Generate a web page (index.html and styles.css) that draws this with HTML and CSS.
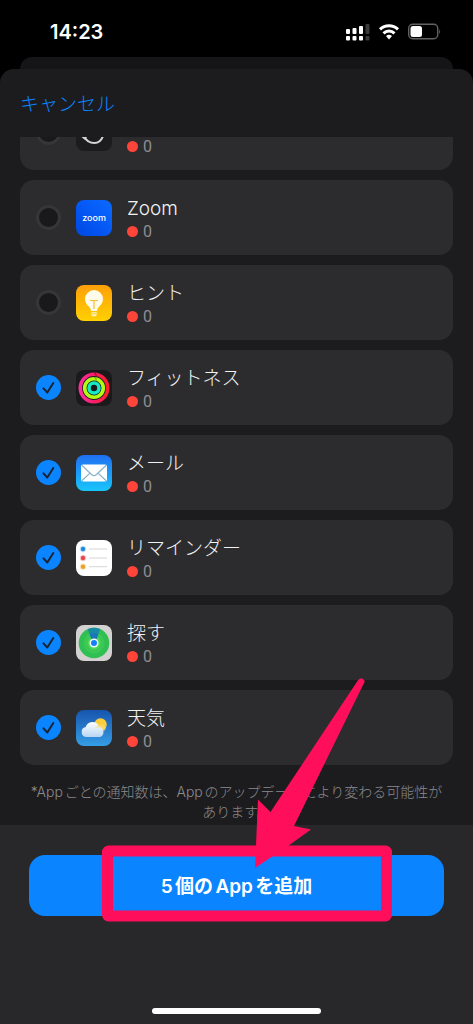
FILE: index.html
```html
<!DOCTYPE html>
<html lang="ja">
<head>
  <meta charset="UTF-8" />
  <meta name="viewport" content="width=device-width, initial-scale=1.0" />
  <title>Appを追加</title>
  <link rel="stylesheet" href="styles.css">
</head>
<body>
  <header class="status-bar">
    <span class="time">14:23</span>
    <svg class="status-icons" width="96" height="18" viewBox="0 0 96 18" aria-hidden="true">
      <g fill="#fff">
        <rect x="1" y="6" width="4" height="5" rx="1" />
        <rect x="7.5" y="5" width="4" height="6" rx="1" />
        <rect x="14" y="3" width="4" height="8" rx="1" />
        <rect x="1" y="13" width="4" height="4.5" rx="1" />
        <rect x="7.5" y="13" width="4" height="4.5" rx="1" />
        <rect x="14" y="13" width="4" height="4.5" rx="1" />
      </g>
      <g fill="#3a3a3c">
        <rect x="20.500" y="1" width="4" height="10" rx="1" />
        <rect x="20.500" y="13" width="4" height="4.5" rx="1" />
      </g>
      <g fill="none" stroke="#fff" stroke-width="3">
        <path d="M35 6.300a13 13 0 0 1 18 0" />
        <path d="M38.500 10.300a8 8 0 0 1 11 0" />
      </g>
      <path d="M41 13a4.500 4.500 0 0 1 6 0L44 16.400z" fill="#fff" />
      <rect x="63.700" y="1.200" width="29" height="14.600" rx="4" fill="none" stroke="#626264" stroke-width="1.400" />
      <rect x="65.500" y="3" width="11.500" height="11" rx="2.500" fill="#fff" />
      <path d="M94.200 6q1.800 2.500 0 5z" fill="#626264" />
    </svg>
  </header>

  <div class="back-sheet"></div>

  <main class="sheet">
    <div class="sheet-header">
      <button type="button" class="cancel">キャンセル</button>
    </div>

    <form class="app-form" id="appForm">
      <div class="app-list">
        <label class="app-row">
          <input type="checkbox" class="check" />
          <svg class="app-icon" viewBox="0 0 36 36" aria-hidden="true">
            <rect width="36" height="36" rx="8" fill="#1c1c1e" />
            <path d="M8 20.500q2.500 7.500 10.500 7.500q6 0 8.500-7" fill="none" stroke="#d5d5d7" stroke-width="2" />
            <path d="M5.500 22l6-1-2.500 4z" fill="#d5d5d7" />
          </svg>
          <span class="app-text">
            <span class="app-name"></span>
            <span class="app-count">0</span>
          </span>
        </label>

        <label class="app-row">
          <input type="checkbox" class="check" />
          <svg class="app-icon" viewBox="0 0 36 36" aria-hidden="true">
            <defs>
              <linearGradient id="zoomBg" x1="1" y1="0" x2="0" y2="1">
                <stop offset="0" stop-color="#0b6bff" />
                <stop offset=".5" stop-color="#0558f5" />
                <stop offset="1" stop-color="#0048e0" />
              </linearGradient>
            </defs>
            <rect width="36" height="36" rx="8" fill="url(#zoomBg)" />
            <text class="zoom-mark" x="18" y="20.500" text-anchor="middle">zoom</text>
          </svg>
          <span class="app-text">
            <span class="app-name">Zoom</span>
            <span class="app-count">0</span>
          </span>
        </label>

        <label class="app-row">
          <input type="checkbox" class="check" />
          <svg class="app-icon" viewBox="0 0 36 36" aria-hidden="true">
            <defs>
              <linearGradient id="tipsBg" x1="0" y1="0" x2="0" y2="1">
                <stop offset="0" stop-color="#ff9f0a" />
                <stop offset="1" stop-color="#ffd100" />
              </linearGradient>
            </defs>
            <rect width="36" height="36" rx="8" fill="url(#tipsBg)" />
            <path d="M18 5a9 9 0 0 0-9 9c0 3.500 1.800 5.500 3.800 7.500 1.500 1.500 2 2.500 2.200 4.500h6c.2-2 .7-3 2.200-4.500 2-2 3.800-4 3.800-7.500a9 9 0 0 0-9-9z" fill="#fffbea" />
            <path d="M15.200 27.200h5.600v2.300q-.3 2-2.800 2t-2.800-2z" fill="#fff3c0" />
            <path d="M15.200 28.800h5.600" stroke="#ffc400" stroke-width=".8" />
            <path d="M14 15.500h8M18 15.500v8.500" stroke="#f3bd35" stroke-width="1.200" fill="none" />
          </svg>
          <span class="app-text">
            <span class="app-name">ヒント</span>
            <span class="app-count">0</span>
          </span>
        </label>

        <label class="app-row">
          <input type="checkbox" class="check" checked />
          <svg class="app-icon" viewBox="0 0 36 36" aria-hidden="true">
            <defs>
              <linearGradient id="moveRing" x1="0" y1="0" x2="1" y2="0">
                <stop offset="0" stop-color="#ff2ea0" />
                <stop offset=".5" stop-color="#fa1e6c" />
                <stop offset="1" stop-color="#ff1f2c" />
              </linearGradient>
            </defs>
            <rect width="36" height="36" rx="8" fill="#1b191c" />
            <g fill="none" stroke-width="3.600">
              <circle cx="18" cy="18" r="13.700" stroke="url(#moveRing)" />
              <circle cx="18" cy="18" r="9.300" stroke="#b2fb12" />
              <circle cx="18" cy="18" r="5" stroke="#16e8c8" />
            </g>
            <path d="M18 2.500q3 1.500 2 3.700" fill="none" stroke="#8c0820" stroke-width="1" />
            <path d="M18 7q3 1 2 3.500" fill="none" stroke="#5f9410" stroke-width="1" />
          </svg>
          <span class="app-text">
            <span class="app-name">フィットネス</span>
            <span class="app-count">0</span>
          </span>
        </label>

        <label class="app-row">
          <input type="checkbox" class="check" checked />
          <svg class="app-icon" viewBox="0 0 36 36" aria-hidden="true">
            <defs>
              <linearGradient id="mailBg" x1="0" y1="0" x2="0" y2="1">
                <stop offset="0" stop-color="#1f70f2" />
                <stop offset="1" stop-color="#19c5fb" />
              </linearGradient>
            </defs>
            <rect width="36" height="36" rx="8" fill="url(#mailBg)" />
            <rect x="5" y="9.500" width="26" height="17" rx="2" fill="#fff" />
            <path d="M5.800 10.300l9.700 9.200q2.500 2.200 5 0l9.700-9.200M5.800 25.700l8.200-7.600M30.200 25.700L22 18.100" fill="none" stroke="#86b4cc" stroke-width="1.200" />
          </svg>
          <span class="app-text">
            <span class="app-name">メール</span>
            <span class="app-count">0</span>
          </span>
        </label>

        <label class="app-row">
          <input type="checkbox" class="check" checked />
          <svg class="app-icon" viewBox="0 0 36 36" aria-hidden="true">
            <rect width="36" height="36" rx="8" fill="#fff" />
            <g fill="none" stroke-width="1">
              <circle cx="7" cy="9" r="2.800" stroke="#b9dcf5" />
              <circle cx="7" cy="18" r="2.800" stroke="#f6c3c2" />
              <circle cx="7" cy="26.700" r="2.800" stroke="#f8dfb4" />
            </g>
            <circle cx="7" cy="9" r="2.200" fill="#2089dc" />
            <circle cx="7" cy="18" r="2.200" fill="#e8474a" />
            <circle cx="7" cy="26.700" r="2.200" fill="#eca126" />
            <path d="M13 9h18M13 18h18M13 26.700h18" stroke="#d6d6d8" stroke-width="1" />
          </svg>
          <span class="app-text">
            <span class="app-name">リマインダー</span>
            <span class="app-count">0</span>
          </span>
        </label>

        <label class="app-row">
          <input type="checkbox" class="check" checked />
          <svg class="app-icon" viewBox="0 0 36 36" aria-hidden="true">
            <rect width="36" height="36" rx="8" fill="#d3d2d1" />
            <circle cx="18" cy="18" r="15.300" fill="#30bf52" />
            <circle cx="18" cy="18" r="10.500" fill="#3bc854" />
            <circle cx="18" cy="18" r="6.500" fill="#4fd858" />
            <path d="M11.800 4.200q6.200-2.900 12.400 0L20.500 14h-5z" fill="#198aa5" />
            <path d="M13.700 9q4.300-1.500 8.600 0l-1.800 5h-5z" fill="#1a75ba" />
            <circle cx="18" cy="18" r="4.500" fill="#f1fbf4" />
            <circle cx="18" cy="18" r="3" fill="#147efb" />
          </svg>
          <span class="app-text">
            <span class="app-name">探す</span>
            <span class="app-count">0</span>
          </span>
        </label>

        <label class="app-row">
          <input type="checkbox" class="check" checked />
          <svg class="app-icon" viewBox="0 0 36 36" aria-hidden="true">
            <defs>
              <linearGradient id="skyBg" x1="0" y1="0" x2="0" y2="1">
                <stop offset="0" stop-color="#1755ae" />
                <stop offset="1" stop-color="#359ee5" />
              </linearGradient>
              <linearGradient id="cloud" x1="0" y1="0" x2="0" y2="1">
                <stop offset="0" stop-color="#fff" />
                <stop offset="1" stop-color="#b7d6f2" />
              </linearGradient>
            </defs>
            <rect width="36" height="36" rx="8" fill="url(#skyBg)" />
            <circle cx="24.500" cy="14.500" r="6.200" fill="#fdce3c" />
            <path d="M10.500 27a5 5 0 0 1-.8-9.900 7 7 0 0 1 13.300-.6 5.500 5.500 0 0 1 1 10.500z" fill="url(#cloud)" />
            <path d="M19.500 18a6 6 0 0 1 8.300 3.500 5 5 0 0 0 2-3.300 6 6 0 0 0-8-3.500z" fill="#f7dc87" opacity=".6" />
          </svg>
          <span class="app-text">
            <span class="app-name">天気</span>
            <span class="app-count">0</span>
          </span>
        </label>
      </div>

      <p class="note">*Appごとの通知数は、Appのアップデートにより変わる可能性があります。</p>
    </form>

    <footer class="sheet-footer">
      <div class="submit-wrap">
        <button type="submit" form="appForm" class="submit">5個のAppを追加</button>
        <svg class="pointer" width="290" height="244" viewBox="0 0 290 244" aria-hidden="true">
          <rect x="5.500" y="173" width="279" height="65" rx="1" fill="none" stroke="#ff0f5b" stroke-width="11" stroke-linejoin="round" />
          <path d="M153 190L156 121.500L168.500 134L255.500 3Q258 -1 261 1T261.500 6L192 148L209 151.500L186 168z" fill="#ff0f5b" />
        </svg>
      </div>
      <div class="home-bar"></div>
    </footer>
  </main>
</body>
</html>
```
FILE: styles.css
```css
* {
  box-sizing: border-box;
}
body {
  margin: 0;
  height: 100vh;
  display: flex;
  flex-direction: column;
  background: #000;
  color: #f2f2f4;
  font-family: Inter, "Noto Sans CJK JP", sans-serif;
  text-autospace: normal;
}
button {
  border: none;
  font-family: inherit;
  cursor: pointer;
}
.status-bar {
  display: flex;
  justify-content: space-between;
  align-items: center;
  height: 57px;
  padding: 6px 32px 0 50px;
}
.time {
  font-size: 20px;
  font-weight: 600;
  color: #fff;
}
.back-sheet {
  height: 12px;
  margin: 0 20px;
  border-radius: 12px 12px 0 0;
  background: #151518;
}
.sheet {
  flex: 1;
  min-height: 0;
  display: flex;
  flex-direction: column;
  border-radius: 14px 14px 0 0;
  background: #1c1c1e;
}
.sheet-header {
  display: flex;
  align-items: center;
  height: 68px;
  padding: 0 20px 2px;
}
.cancel {
  padding: 0;
  background: none;
  color: #0a84ff;
  font-size: 19px;
  font-weight: 300;
}

/* list is scrolled to its end */
.app-form {
  flex: 1;
  min-height: 0;
  display: flex;
  flex-direction: column;
  justify-content: flex-end;
  overflow: hidden;
  padding: 0 20px;
}
.app-list {
  display: flex;
  flex-direction: column;
  gap: 10px;
}
.app-row {
  display: flex;
  align-items: center;
  gap: 15px;
  height: 75px;
  padding: 0 16px;
  border-radius: 14px;
  background: #2c2c2e;
}
.check {
  appearance: none;
  width: 25px;
  height: 25px;
  margin: 0;
  border: 3px solid #363638;
  border-radius: 50%;
  background: #19191b;
}
.check:checked {
  border: none;
  background: #0a84ff url("data:image/svg+xml,%3Csvg xmlns='http://www.w3.org/2000/svg' viewBox='0 0 25 25'%3E%3Cpath d='M7.500 13.300l3.800 4.200 6-9.500' fill='none' stroke='%231c2430' stroke-width='2' stroke-linecap='round' stroke-linejoin='round'/%3E%3C/svg%3E");
}
.app-icon {
  width: 36px;
  height: 36px;
}
.zoom-mark {
  font-size: 9px;
  font-weight: 500;
  fill: #fff;
}
.app-text {
  display: flex;
  flex-direction: column;
  padding-top: 2px;
}
.app-name {
  height: 26px;
  font-size: 19px;
  font-weight: 300;
  line-height: 26px;
}
.app-count {
  display: flex;
  align-items: center;
  gap: 5px;
  height: 20px;
  color: #8e8e93;
  font-family: Roboto, sans-serif;
  font-size: 16px;
  line-height: 20px;
}
.app-count::before {
  content: "";
  width: 11px;
  height: 11px;
  border-radius: 50%;
  background: #ff453a;
}
.note {
  margin: 0;
  padding: 17px 8px 3px;
  color: #8a8a8f;
  font-size: 14px;
  font-weight: 300;
  line-height: 20px;
  text-align: center;
}

.sheet-footer {
  padding: 30px 29px 10px;
  background: #28282a;
}
.submit-wrap {
  position: relative;
}
.submit {
  display: block;
  width: 100%;
  height: 61px;
  padding: 0 0 2px;
  border-radius: 16px;
  background: #0a84ff;
  color: #fff;
  font-size: 19px;
  font-weight: 600;
}
.pointer {
  position: absolute;
  left: 73px;
  bottom: -6px;
  pointer-events: none;
}
.home-bar {
  width: 169px;
  height: 6px;
  margin: 92px auto 0;
  border-radius: 3px;
  background: #fff;
}
```
